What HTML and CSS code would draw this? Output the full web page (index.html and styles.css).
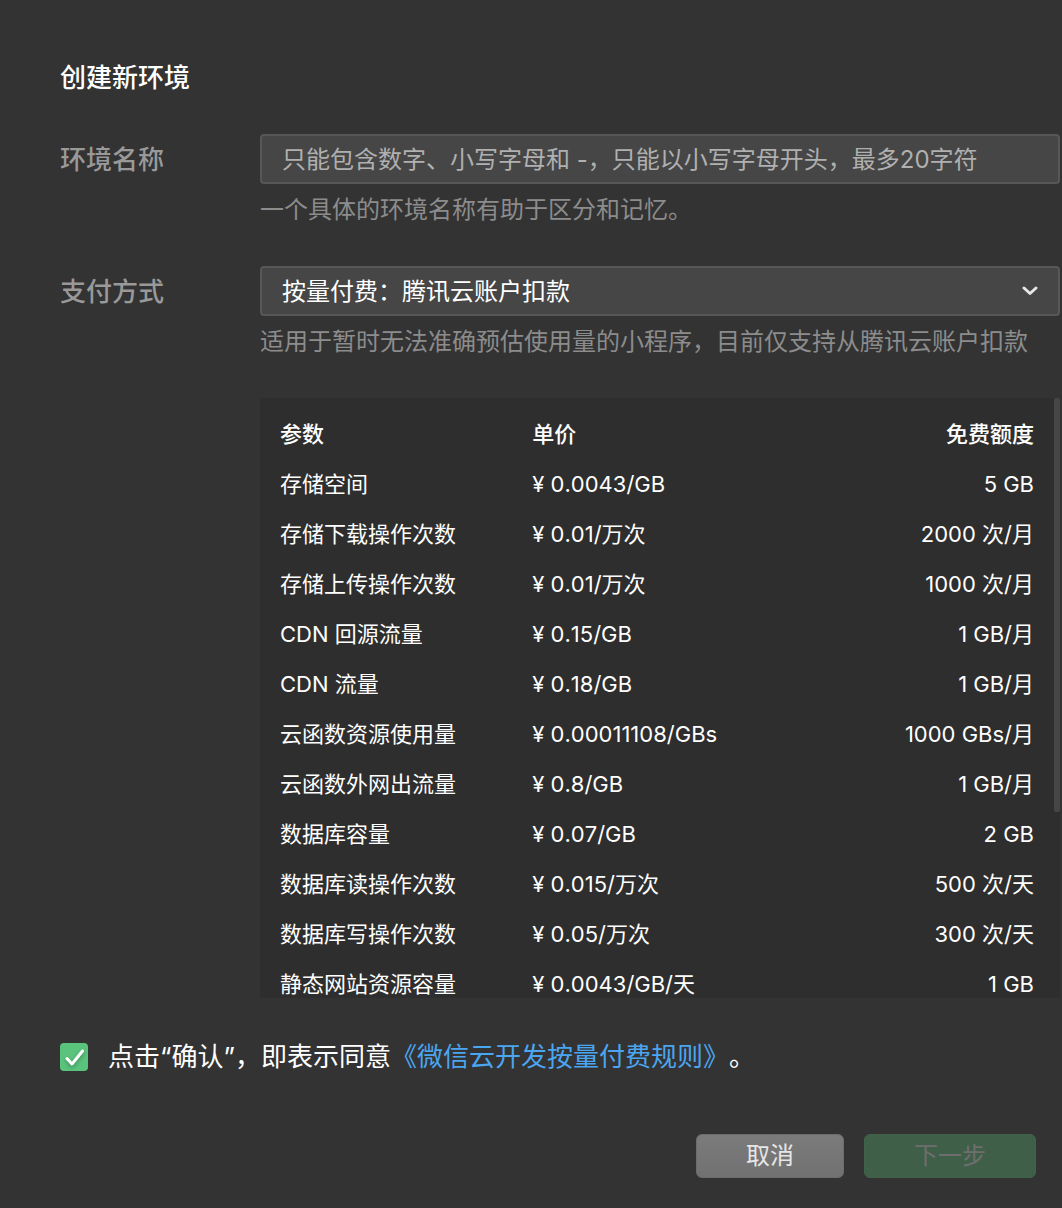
FILE: index.html
```html
<!DOCTYPE html>
<html lang="zh-CN">
<head>
<meta charset="utf-8">
<meta name="viewport" content="width=device-width, initial-scale=1">
<title>创建新环境</title>
<link rel="stylesheet" href="styles.css">
</head>
<body>
<form class="dialog">
  <h1 class="title">创建新环境</h1>

  <div class="field">
    <label class="label" for="env-name">环境名称</label>
    <div class="control">
      <input class="box" id="env-name" type="text" maxlength="20" placeholder="只能包含数字、小写字母和 -，只能以小写字母开头，最多20字符">
      <p class="hint">一个具体的环境名称有助于区分和记忆。</p>
    </div>
  </div>

  <div class="field">
    <label class="label" for="pay-mode">支付方式</label>
    <div class="control">
      <div class="select-wrap">
        <select class="box select" id="pay-mode">
          <option>按量付费：腾讯云账户扣款</option>
        </select>
        <svg class="chevron" viewBox="0 0 16 10" aria-hidden="true"><path d="M2 2l6 5.500 6-5.500"/></svg>
      </div>
      <p class="hint">适用于暂时无法准确预估使用量的小程序，目前仅支持从腾讯云账户扣款</p>

      <div class="panel">
        <div class="scroll">
          <table class="prices">
            <thead>
              <tr><th>参数</th><th>单价</th><th>免费额度</th></tr>
            </thead>
            <tbody>
              <tr><td>存储空间</td><td>¥ 0.0043/GB</td><td>5 GB</td></tr>
              <tr><td>存储下载操作次数</td><td>¥ 0.01/万次</td><td>2000 次/月</td></tr>
              <tr><td>存储上传操作次数</td><td>¥ 0.01/万次</td><td>1000 次/月</td></tr>
              <tr><td>CDN 回源流量</td><td>¥ 0.15/GB</td><td>1 GB/月</td></tr>
              <tr><td>CDN 流量</td><td>¥ 0.18/GB</td><td>1 GB/月</td></tr>
              <tr><td>云函数资源使用量</td><td>¥ 0.00011108/GBs</td><td>1000 GBs/月</td></tr>
              <tr><td>云函数外网出流量</td><td>¥ 0.8/GB</td><td>1 GB/月</td></tr>
              <tr><td>数据库容量</td><td>¥ 0.07/GB</td><td>2 GB</td></tr>
              <tr><td>数据库读操作次数</td><td>¥ 0.015/万次</td><td>500 次/天</td></tr>
              <tr><td>数据库写操作次数</td><td>¥ 0.05/万次</td><td>300 次/天</td></tr>
              <tr><td>静态网站资源容量</td><td>¥ 0.0043/GB/天</td><td>1 GB</td></tr>
            </tbody>
          </table>
        </div>
        <span class="thumb"></span>
      </div>
    </div>
  </div>

  <div class="agree">
    <span class="check">
      <input class="check-input" id="agree" type="checkbox" checked>
      <svg class="check-mark" viewBox="0 0 28 28" aria-hidden="true"><path d="M7 15.500l5 5.500L22.500 8"/></svg>
    </span>
    <p class="agree-text"><label for="agree">点击“确认”，即表示同意</label><a class="link" href="#rules">《微信云开发按量付费规则》</a>。</p>
  </div>

  <div class="actions">
    <button class="btn cancel" type="button">取消</button>
    <button class="btn next" type="submit" disabled>下一步</button>
  </div>
</form>
</body>
</html>
```
FILE: styles.css
```css
* {
  box-sizing: border-box;
}

body {
  margin: 0;
  background: #333333;
  color: #ffffff;
  font-family: Inter, "Noto Sans CJK SC", sans-serif;
  font-size: 24px;
  font-kerning: none;
  text-spacing-trim: space-all;
}

.dialog {
  padding: 58px 2px 30px 60px;
}

.title {
  margin: 0 0 36px;
  font-size: 26px;
  line-height: 40px;
  font-weight: 500;
}

.field {
  display: flex;
  margin-bottom: 38px;
}

.label {
  flex: 0 0 200px;
  color: #999999;
  font-size: 26px;
  line-height: 52px;
  font-weight: 500;
}

.control {
  flex: 1;
  min-width: 0;
}

.box {
  display: block;
  width: 100%;
  height: 50px;
  margin: 0;
  padding: 0 20px;
  border: 2px solid #575757;
  border-radius: 4px;
  background: #464646;
  color: #ffffff;
  font: inherit;
  outline: none;
}

.box::placeholder {
  color: #b0b0b0;
  opacity: 1;
}

.select-wrap {
  position: relative;
}

.select {
  appearance: none;
}

.chevron {
  position: absolute;
  top: 20px;
  right: 22px;
  width: 16px;
  height: 10px;
  fill: none;
  stroke: #e6e6e6;
  stroke-width: 3;
  stroke-linecap: round;
  stroke-linejoin: round;
}

.hint {
  margin: 8px 0 0;
  color: #8c8c8c;
  line-height: 36px;
  white-space: nowrap;
}

.panel {
  position: relative;
  margin-top: 38px;
  background: #2e2e2e;
}

.scroll {
  max-height: 600px;
  overflow-y: auto;
  scrollbar-width: none;
  padding: 11px 26px 0 20px;
}

.thumb {
  position: absolute;
  top: 0;
  right: 0;
  width: 6px;
  height: 69%;
  border-radius: 2px;
  background: #464646;
}

.prices {
  width: 100%;
  border-collapse: collapse;
  table-layout: fixed;
  font-size: 22px;
  line-height: 50px;
  white-space: nowrap;
}

.prices th,
.prices td {
  height: 50px;
  padding: 0;
  text-align: left;
}

.prices th {
  font-weight: 500;
}

.prices th:nth-child(2),
.prices td:nth-child(2) {
  padding-left: 1px;
}

.prices th:nth-child(3),
.prices td:nth-child(3) {
  text-align: right;
}

.agree {
  display: flex;
  align-items: center;
  gap: 20px;
  margin-top: 40px;
}

.check {
  position: relative;
  flex: none;
  width: 28px;
  height: 28px;
}

.check-input {
  appearance: none;
  display: block;
  width: 28px;
  height: 28px;
  margin: 0;
  border-radius: 4px;
  background: #5ac47d;
}

.check-mark {
  position: absolute;
  inset: 0;
  fill: none;
  stroke: #ffffff;
  stroke-width: 3;
  stroke-linecap: round;
  stroke-linejoin: round;
  filter: drop-shadow(0 2px 2px rgba(0, 0, 0, 0.3));
  pointer-events: none;
}

.agree-text {
  margin: 0;
  font-size: 26px;
  line-height: 38px;
}

.link {
  color: #4ba5f0;
  text-decoration: none;
}

.actions {
  display: flex;
  justify-content: flex-end;
  gap: 20px;
  margin: 58px 24px 0 0;
}

.btn {
  height: 44px;
  padding: 0;
  border: 1px solid;
  border-radius: 6px;
  font: inherit;
  line-height: 40px;
}

.cancel {
  width: 148px;
  border-color: #6c6c6c;
  background: linear-gradient(#7b7b7b, #717171);
  color: #e6e6e6;
}

.next {
  width: 172px;
  border-color: #3e6349;
  background: #3f5f49;
  color: #6e6e6e;
}
```
